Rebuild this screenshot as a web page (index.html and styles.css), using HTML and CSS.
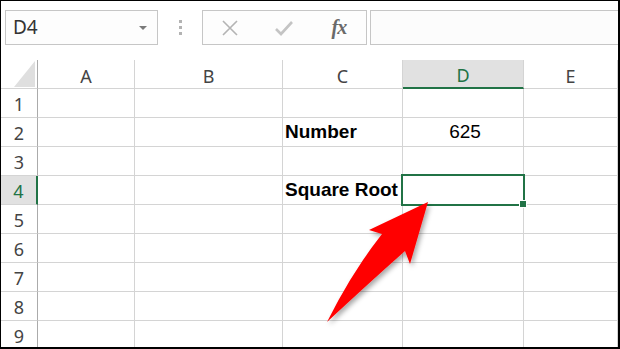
FILE: index.html
```html
<!DOCTYPE html>
<html lang="en">
<head>
  <meta charset="UTF-8">
  <meta name="viewport" content="width=device-width, initial-scale=1.0">
  <title>Square Root</title>
  <link rel="stylesheet" href="styles.css">
</head>
<body>
  <div class="frame">
    <div class="toolbar">
      <div class="name-box">
        <span class="cell-ref">D4</span>
        <span class="caret"></span>
      </div>
      <div class="grip"><i></i><i></i><i></i></div>
      <div class="fx-buttons">
        <span class="fx-btn">
          <svg width="18" height="16" viewBox="0 0 18 16"><path d="M2 1 L16 15 M16 1 L2 15" stroke="#b4b4b4" stroke-width="1.6" fill="none"/></svg>
        </span>
        <span class="fx-btn">
          <svg width="20" height="16" viewBox="0 0 20 16"><path d="M2 9 L7 14 L18 2" stroke="#c4c4c4" stroke-width="2.6" fill="none"/></svg>
        </span>
        <span class="fx-btn fx-label">fx</span>
      </div>
      <div class="formula-bar"></div>
    </div>

    <div class="sheet">
      <div class="hdr corner">
        <svg width="22" height="26" viewBox="0 0 22 26"><polygon points="21,0 21,26 0,26" fill="#dfdfdf"/></svg>
      </div>
      <div class="hdr col">A</div>
      <div class="hdr col">B</div>
      <div class="hdr col">C</div>
      <div class="hdr col active">D</div>
      <div class="hdr col">E</div>

      <div class="hdr row">1</div>
      <div class="cell"></div><div class="cell"></div><div class="cell"></div><div class="cell"></div><div class="cell"></div>

      <div class="hdr row">2</div>
      <div class="cell"></div><div class="cell"></div>
      <div class="cell label">Number</div>
      <div class="cell value">625</div>
      <div class="cell"></div>

      <div class="hdr row">3</div>
      <div class="cell"></div><div class="cell"></div><div class="cell"></div><div class="cell"></div><div class="cell"></div>

      <div class="hdr row active">4</div>
      <div class="cell"></div><div class="cell"></div>
      <div class="cell label">Square Root</div>
      <div class="cell selected"><span class="fill-handle"></span></div>
      <div class="cell"></div>

      <div class="hdr row">5</div>
      <div class="cell"></div><div class="cell"></div><div class="cell"></div><div class="cell"></div><div class="cell"></div>

      <div class="hdr row">6</div>
      <div class="cell"></div><div class="cell"></div><div class="cell"></div><div class="cell"></div><div class="cell"></div>

      <div class="hdr row">7</div>
      <div class="cell"></div><div class="cell"></div><div class="cell"></div><div class="cell"></div><div class="cell"></div>

      <div class="hdr row">8</div>
      <div class="cell"></div><div class="cell"></div><div class="cell"></div><div class="cell"></div><div class="cell"></div>

      <div class="hdr row">9</div>
      <div class="cell"></div><div class="cell"></div><div class="cell"></div><div class="cell"></div><div class="cell"></div>
    </div>
  </div>

  <!-- callout arrow pointing at D4 -->
  <svg class="callout" width="620" height="349" viewBox="0 0 620 349">
    <defs>
      <filter id="shadow" x="-20%" y="-20%" width="140%" height="140%">
        <feDropShadow dx="2" dy="3" stdDeviation="2.5" flood-color="#000" flood-opacity="0.35"/>
      </filter>
    </defs>
    <path d="M428 202 L369 230 L382 234 Q352 272 327 322 Q370 282 405 251 L410 264 Z" fill="#ff0000" filter="url(#shadow)"/>
  </svg>
</body>
</html>
```

FILE: styles.css
```css
body {
  margin: 0;
  padding: 0;
  background-color: #fff;
  position: relative;
  font-family: "Noto Sans", sans-serif;
}

.frame {
  box-sizing: border-box;
  width: 620px;
  height: 349px;
  border-style: solid;
  border-color: #000;
  border-width: 1px 2px 2px 1px;
  overflow: hidden;
  background-color: #fff;
}

.toolbar {
  display: flex;
  align-items: stretch;
  height: 35px;
  padding: 9px 0 0 4px;
  margin-bottom: 15px;
}

.name-box {
  box-sizing: border-box;
  width: 153px;
  border: 1px solid #c6c6c6;
  background-color: #fdfdfd;
  display: flex;
  align-items: center;
  justify-content: space-between;
  padding: 0 10px 0 7px;
}

.cell-ref {
  font-size: 19px;
  color: #333;
  line-height: 1;
  margin-top: -1px;
}

.caret {
  width: 0;
  height: 0;
  border-left: 4px solid transparent;
  border-right: 4px solid transparent;
  border-top: 4px solid #7a7a7a;
  margin-top: 1px;
}

.grip {
  width: 44px;
  display: flex;
  flex-direction: column;
  align-items: center;
  justify-content: center;
  gap: 3px;
}

.grip i {
  display: block;
  width: 3px;
  height: 3px;
  background-color: #b3b3b3;
}

.fx-buttons {
  box-sizing: border-box;
  width: 165px;
  border: 1px solid #c6c6c6;
  background-color: #fdfdfd;
  display: flex;
}

.fx-btn {
  flex: 1;
  display: flex;
  align-items: center;
  justify-content: center;
}

.fx-label {
  font-family: "Liberation Serif", serif;
  font-style: italic;
  font-weight: bold;
  font-size: 20px;
  color: #6a6a6a;
  letter-spacing: -1px;
}

.formula-bar {
  flex: 1;
  margin-left: 3px;
  border: 1px solid #c6c6c6;
  border-right: none;
  background-color: #fcfcfc;
}

.sheet {
  display: grid;
  grid-template-columns: 37px 97px 148px 120px 121px 1fr;
  grid-auto-rows: 29px;
}

.sheet > div {
  box-sizing: border-box;
  border-right: 1px solid #d4d4d4;
  border-bottom: 1px solid #d4d4d4;
  display: flex;
  align-items: center;
}

.hdr {
  justify-content: center;
  font-family: "Noto Sans", sans-serif;
  font-size: 18px;
  color: #444;
  padding-top: 3px;
}

.sheet > .row {
  border-right-color: #ababab;
  padding-top: 1px;
}

.sheet > .corner {
  border-right-color: #ababab;
  justify-content: flex-end;
  align-items: flex-end;
  padding: 0 1px 1px 0;
}

.corner svg {
  display: block;
}

.sheet > .hdr.active {
  background-color: #e1e1e1;
  color: #217346;
}

.sheet > .col.active {
  border-bottom: 2px solid #217346;
}

.sheet > .row.active {
  border-right: 2px solid #217346;
}

.cell {
  font-family: "Liberation Sans", Arial, sans-serif;
  font-size: 19px;
  color: #000;
}

.label {
  font-weight: bold;
  padding-left: 2px;
  white-space: nowrap;
  overflow: visible;
}

.value {
  justify-content: center;
  padding-left: 4px;
}

.selected {
  position: relative;
}

.selected::before {
  content: "";
  position: absolute;
  top: -2px;
  left: -2px;
  right: -2px;
  bottom: -2px;
  border: 2px solid #217346;
}

.fill-handle {
  position: absolute;
  right: -4px;
  bottom: -4px;
  width: 6px;
  height: 6px;
  background-color: #217346;
  border: 1px solid #fff;
}

.callout {
  position: absolute;
  top: 0;
  left: 0;
  pointer-events: none;
}
```
